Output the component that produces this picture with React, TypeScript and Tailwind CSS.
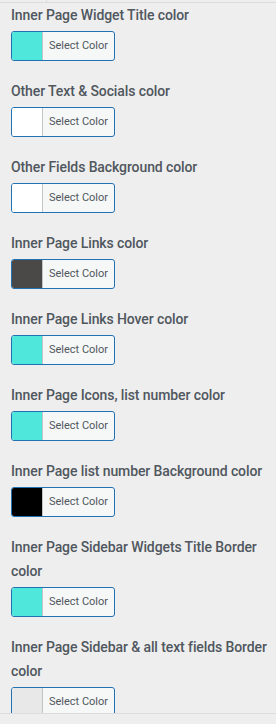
const fields = [
  { label: "Inner Page Widget Title color", color: "#4fe6db" },
  { label: "Other Text & Socials color", color: "#ffffff" },
  { label: "Other Fields Background color", color: "#ffffff" },
  { label: "Inner Page Links color", color: "#4a4948" },
  { label: "Inner Page Links Hover color", color: "#4fe6db" },
  { label: "Inner Page Icons, list number color", color: "#4fe6db" },
  { label: "Inner Page list number Background color", color: "#000000" },
  { label: "Inner Page Sidebar Widgets Title Border color", color: "#4fe6db" },
  { label: "Inner Page Sidebar & all text fields Border color", color: "#e9e8e8" },
];

function ColorControl({ label, color }: { label: string; color: string }) {
  return (
    <li className="mb-[18px]">
      <span className="block text-[14px] leading-[24px] font-medium tracking-[-0.1px] text-[#50575e]">{label}</span>
      <button
        type="button"
        className="mt-[4px] flex h-[30px] w-[104px] overflow-hidden rounded-[3px] border border-[#2271b1] bg-[#f6f7f7]"
      >
        <span className="h-full w-[31px] border-r border-[#c3c4c7]" style={{ backgroundColor: color }} />
        <span className="flex-1 self-center text-center text-[11px] leading-[28px] text-[#50575e]">Select Color</span>
      </button>
    </li>
  );
}

export default function App() {
  return (
    <div className="h-[724px] w-[276px] bg-[#eeeeee] font-['Roboto',sans-serif] flex flex-col">
      <div className="h-[713px] overflow-hidden">
        <div className="h-[3px] border-b border-[#dcdcde] flex">
          <div className="w-[47px] border-r border-[#dcdcde]" />
        </div>
        <ul className="pl-[11px]">
          {fields.map((f) => (
            <ColorControl key={f.label} label={f.label} color={f.color} />
          ))}
        </ul>
      </div>
      <div className="flex-1 border-t border-[#dcdcde] bg-[#eeeeee]" />
    </div>
  );
}
